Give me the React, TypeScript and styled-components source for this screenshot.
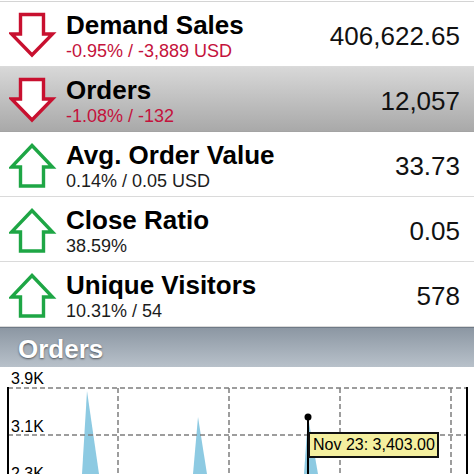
import React from 'react';
import styled, { createGlobalStyle } from 'styled-components';

const Global = createGlobalStyle`
  html, body { margin: 0; padding: 0; background: #fff; overflow: hidden; }
  body { font-family: "Liberation Sans", Arial, sans-serif; }
`;

const Page = styled.div`
  width: 474px;
  height: 474px;
  display: flex;
  flex-direction: column;
  overflow: hidden;
`;

const List = styled.div`
  margin-top: 1px;
  border-top: 1px solid #d4d4d4;
  display: flex;
  flex-direction: column;
`;

const Row = styled.div<{ $selected?: boolean }>`
  height: 65px;
  box-sizing: border-box;
  display: flex;
  align-items: flex-start;
  padding: 0 14px 0 9px;
  border-bottom: 1px solid ${(p) => (p.$selected ? '#a4a4a4' : '#dadada')};
  background: ${(p) => (p.$selected ? 'linear-gradient(#d8d8d8, #a9a9a9)' : '#fff')};
`;

const ArrowBox = styled.svg`
  flex: none;
  width: 48px;
  height: 48px;
  margin-top: 10px;
`;

const Texts = styled.div`
  flex: 1;
  margin-left: 9px;
  padding-top: 9px;
  display: flex;
  flex-direction: column;
`;

const Title = styled.div`
  font-size: 26px;
  line-height: 28px;
  font-weight: bold;
  color: #000;
`;

const Sub = styled.div<{ $down?: boolean }>`
  margin-top: 2px;
  font-size: 18px;
  line-height: 20px;
  color: ${(p) => (p.$down ? '#c4123c' : '#1c1c1c')};
`;

const Value = styled.div`
  margin-top: 19px;
  font-size: 26px;
  line-height: 30px;
  color: #111;
`;

const Header = styled.div`
  height: 40px;
  box-sizing: border-box;
  border-top: 1px solid #6f7a86;
  background: linear-gradient(#8c97a3, #b8c1ca);
  padding: 3px 0 0 18px;
  font-size: 26px;
  line-height: 36px;
  font-weight: bold;
  color: #fff;
  text-shadow: 0 1px 2px rgba(0, 0, 0, 0.55);
`;

const Chart = styled.div`
  position: relative;
  flex: 1;
  background: #fff;
  overflow: hidden;
`;

const ChartSvg = styled.svg`
  display: block;
  width: 474px;
  height: 107px;
  font-family: "Liberation Sans", Arial, sans-serif;
`;

const Tooltip = styled.div`
  position: absolute;
  left: 308px;
  top: 65px;
  width: 131px;
  height: 26px;
  box-sizing: border-box;
  border: 2px solid #111;
  background: #f4ef9f;
  font-size: 16px;
  line-height: 22px;
  padding-left: 3px;
  color: #000;
  white-space: nowrap;
`;

const RED = '#c8102f';
const GREEN = '#1ea645';

const Arrow = ({ dir }: { dir: 'up' | 'down' }) => (
  <ArrowBox viewBox="0 0 48 48">
    <path
      d={
        dir === 'down'
          ? 'M11.5 2.5 H34.5 V22 H43.5 L23 43 L2.5 22 H11.5 Z'
          : 'M23 3.5 L43.5 25 H34.5 V44 H11.5 V25 H2.5 Z'
      }
      fill="#fff"
      stroke={dir === 'down' ? RED : GREEN}
      strokeWidth={3.4}
      strokeLinejoin="miter"
    />
  </ArrowBox>
);

const rows = [
  { title: 'Demand Sales', sub: '-0.95% / -3,889 USD', value: '406,622.65', dir: 'down' as const },
  { title: 'Orders', sub: '-1.08% / -132', value: '12,057', dir: 'down' as const, selected: true },
  { title: 'Avg. Order Value', sub: '0.14% / 0.05 USD', value: '33.73', dir: 'up' as const },
  { title: 'Close Ratio', sub: '38.59%', value: '0.05', dir: 'up' as const },
  { title: 'Unique Visitors', sub: '10.31% / 54', value: '578', dir: 'up' as const },
];

const vLines = [118, 229, 340, 451];
const spikes = [
  '87,24 82,107 99,107',
  '198,50 193,107 207,107',
  '308,50 304,107 318,107',
];

export default function App() {
  return (
    <Page>
      <Global />
      <List>
        {rows.map((r) => (
          <Row key={r.title} $selected={r.selected}>
            <Arrow dir={r.dir} />
            <Texts>
              <Title>{r.title}</Title>
              <Sub $down={r.dir === 'down'}>{r.sub}</Sub>
            </Texts>
            <Value>{r.value}</Value>
          </Row>
        ))}
      </List>
      <Header>Orders</Header>
      <Chart>
        <ChartSvg viewBox="0 0 474 107">
          {spikes.map((p) => (
            <polygon key={p} points={p} fill="#8dcae2" />
          ))}
          <line x1={8} y1={21} x2={467} y2={21} stroke="#7d7d7d" strokeWidth={1.5} strokeDasharray="5 3" />
          <line x1={8} y1={68} x2={467} y2={68} stroke="#7d7d7d" strokeWidth={1.5} strokeDasharray="5 3" />
          {vLines.map((x) => (
            <line key={x} x1={x} y1={21} x2={x} y2={107} stroke="#7d7d7d" strokeWidth={1.5} strokeDasharray="5 3" />
          ))}
          <line x1={8} y1={20} x2={8} y2={107} stroke="#000" strokeWidth={2} />
          <line x1={467} y1={20} x2={467} y2={107} stroke="#000" strokeWidth={2} />
          <text x={11} y={17} fontSize={16} fill="#000">3.9K</text>
          <text x={11} y={65} fontSize={16} fill="#000">3.1K</text>
          <text x={11} y={112} fontSize={16} fill="#000">2.3K</text>
          <line x1={308} y1={50} x2={308} y2={107} stroke="#000" strokeWidth={2} />
          <circle cx={308} cy={50} r={3.5} fill="#000" />
        </ChartSvg>
        <Tooltip>Nov 23: 3,403.00</Tooltip>
      </Chart>
    </Page>
  );
}
